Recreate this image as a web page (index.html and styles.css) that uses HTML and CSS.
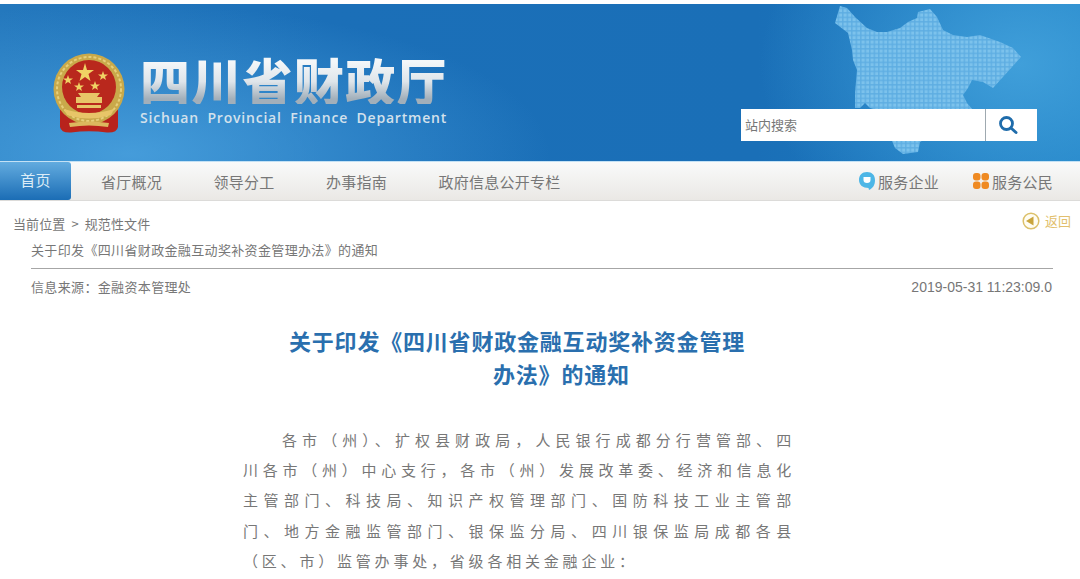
FILE: index.html
```html
<!DOCTYPE html>
<html lang="zh-CN">
<head>
    <meta charset="UTF-8">
    <title>四川省财政厅</title>
    <link rel="stylesheet" href="styles.css">
</head>
<body>
    <header class="banner">
        <svg class="map" viewBox="0 0 190 155" aria-hidden="true">
            <defs>
                <pattern id="dots" width="4.500" height="4.500" patternUnits="userSpaceOnUse">
                    <rect width="4.500" height="4.500" fill="#5dade2"/>
                    <rect x="0.500" y="0.500" width="3.200" height="3.200" fill="#7cc2ec"/>
                </pattern>
            </defs>
            <path fill="url(#dots)" d="M6 2 L13 4 L21 13 L33 24 L43 28 L53 28 L66 24 L74 18 L83 14 L84 8 L96 5 L103 13 L109 26 L119 31 L133 33 L146 31 L166 38 L179 44 L187 53 L178 63 L168 74 L159 84 L149 78 L138 76 L134 84 L129 91 L133 99 L139 106 L86 138 L84 148 L69 150 L61 144 L58 137 L40 105 L36 104 L31 99 L26 104 L21 104 L21 89 L23 66 L19 56 L18 46 L14 29 L1 19 Z"/>
        </svg>
        <div class="brand">
            <svg class="emblem" viewBox="0 0 72 80" aria-hidden="true">
                <path fill="#b8231c" d="M7 50 L7 74 Q8 80 18 79.500 Q36 77 54 79.500 Q64 80 65 74 L65 50 Z"/>
                <circle cx="36" cy="36" r="35.500" fill="#c9a94a"/>
                <circle cx="36" cy="36" r="32" fill="none" stroke="#e6cf7a" stroke-width="2" stroke-dasharray="3 2"/>
                <circle cx="36" cy="34" r="27" fill="#b9281d"/>
                <path fill="#f0d264" d="M32 10 L34 17 L41 17 L35.500 21 L37.500 28 L32 24 L26.500 28 L28.500 21 L23 17 L30 17 Z"/>
                <path fill="#f0d264" d="M15 22 L16.200 25.500 L20 25.500 L17 27.700 L18 31 L15 29 L12 31 L13 27.700 L10 25.500 L13.800 25.500 Z"/>
                <path fill="#f0d264" d="M50 18 L51.200 21.500 L55 21.500 L52 23.700 L53 27 L50 25 L47 27 L48 23.700 L45 21.500 L48.800 21.500 Z"/>
                <path fill="#f0d264" d="M26 29 L27.200 32.500 L31 32.500 L28 34.700 L29 38 L26 36 L23 38 L24 34.700 L21 32.500 L24.800 32.500 Z"/>
                <path fill="#f0d264" d="M42 28 L43.200 31.500 L47 31.500 L44 33.700 L45 37 L42 35 L39 37 L40 33.700 L37 31.500 L40.800 31.500 Z"/>
                <path fill="#e8c568" d="M25 40 H47 L44 44 H49 V50 H23 V44 H28 Z"/>
                <path fill="#e8c568" d="M11 56 Q36 64 61 56 L58 62 Q36 69 14 62 Z"/>
                <path fill="#e8c568" d="M24 52 H48 V55 H24 Z"/>
                <path fill="#dcb85e" d="M16 70 Q36 67 56 70 L55 74 Q36 71 17 74 Z"/>
            </svg>
            <div class="brand-text">
                <div class="brand-name">四川省财政厅</div>
                <div class="brand-en">Sichuan Provincial Finance Department</div>
            </div>
        </div>
        <form class="search">
            <span class="search-input">站内搜索</span>
            <span class="search-btn">
                <svg viewBox="0 0 20 20" width="20" height="20" aria-hidden="true">
                    <circle cx="8.500" cy="8.500" r="6" fill="none" stroke="#1f6cab" stroke-width="2.800"/>
                    <path d="M13 13 L18 17.500" stroke="#1f6cab" stroke-width="3" stroke-linecap="round"/>
                </svg>
            </span>
        </form>
    </header>

    <nav class="nav">
        <a class="nav-home">首页</a>
        <div class="nav-items">
            <a>省厅概况</a>
            <a>领导分工</a>
            <a>办事指南</a>
            <a>政府信息公开专栏</a>
        </div>
        <div class="nav-side">
            <a>
                <svg viewBox="0 0 16 18" width="16" height="18" aria-hidden="true">
                    <path fill="#4db6e6" d="M8 0 C13 0 16 3 16 8 C16 13 14 16 10 18 L9.500 16 C4 16 0 13 0 8 C0 3 3 0 8 0 Z"/>
                    <path fill="#fff" d="M4.500 5 H11.500 V8 Q11.500 11 8 11 Q4.500 11 4.500 8 Z"/>
                </svg>
                服务企业
            </a>
            <a>
                <svg viewBox="0 0 16 16" width="16" height="16" aria-hidden="true">
                    <rect x="0" y="0" width="7.500" height="7.500" rx="3" fill="#ef8a22"/>
                    <rect x="8.500" y="0" width="7.500" height="7.500" rx="3" fill="#ef8a22"/>
                    <rect x="0" y="8.500" width="7.500" height="7.500" rx="3" fill="#ef8a22"/>
                    <rect x="8.500" y="8.500" width="7.500" height="7.500" rx="3" fill="#ef8a22"/>
                </svg>
                服务公民
            </a>
        </div>
    </nav>

    <main class="content">
        <div class="crumb-row">
            <div class="crumb">当前位置 &gt; 规范性文件</div>
            <a class="back">
                <svg viewBox="0 0 18 18" width="18" height="18" aria-hidden="true">
                    <circle cx="9" cy="9" r="7.800" fill="#fffdf2" stroke="#dcc06a" stroke-width="1.500"/>
                    <path d="M4 9 L11.500 4.500 V13.500 Z" fill="#c9a43c"/>
                </svg>
                返回
            </a>
        </div>
        <div class="doc-name">关于印发《四川省财政金融互动奖补资金管理办法》的通知</div>
        <div class="doc-meta">
            <span>信息来源：金融资本管理处</span>
            <span class="doc-date">2019-05-31 11:23:09.0</span>
        </div>
        <h1 class="doc-title">
            <span class="title-first">关于印发《四川省财政金融互动奖补资金管理</span>
            <span class="title-second">办法》的通知</span>
        </h1>
        <p class="doc-body">
            <span class="line line-first">各市（州）、扩权县财政局，人民银行成都分行营管部、四</span>
            <span class="line">川各市（州）中心支行，各市（州）发展改革委、经济和信息化</span>
            <span class="line">主管部门、科技局、知识产权管理部门、国防科技工业主管部</span>
            <span class="line">门、地方金融监管部门、银保监分局、四川银保监局成都各县</span>
            <span class="line line-last">（区、市）监管办事处，省级各相关金融企业：</span>
        </p>
    </main>
</body>
</html>
```

FILE: styles.css
```css
* {
    box-sizing: border-box;
}

html, body {
    height: 579px;
    overflow: hidden;
}

body {
    margin: 0;
    padding-top: 4px;
    background: #fff;
    font-family: "Noto Sans CJK SC", "Liberation Sans", sans-serif;
    color: #666;
}

.banner {
    position: relative;
    height: 157px;
    display: flex;
    align-items: flex-start;
    justify-content: space-between;
    background:
        radial-gradient(ellipse 420px 150px at 130px 150px, rgba(78, 166, 226, 0.8), rgba(78, 166, 226, 0) 100%),
        radial-gradient(ellipse 260px 190px at 1020px 60px, rgba(70, 165, 222, 0.85), rgba(70, 165, 222, 0) 100%),
        linear-gradient(90deg, #2478bd, #1b6fb8 30%, #1a6fb7 70%, #1d7fc4);
}

.map {
    position: absolute;
    left: 834px;
    top: 0;
    width: 190px;
    height: 155px;
}

.brand {
    position: relative;
    display: flex;
    align-items: flex-start;
    gap: 15px;
    margin: 49px 0 0 53px;
}

.emblem {
    width: 72px;
    height: 80px;
}

.brand-name {
    margin-top: 1px;
    font-size: 50px;
    line-height: 50px;
    font-weight: 900;
    letter-spacing: 1.300px;
    background: linear-gradient(180deg, #f4f7f9 15%, #dfe5ea 55%, #a2afba 90%);
    -webkit-background-clip: text;
    background-clip: text;
    color: transparent;
}

.brand-en {
    margin-top: 5px;
    font-family: "Open Sans", "Liberation Sans", sans-serif;
    font-size: 14px;
    line-height: 18px;
    font-weight: 600;
    letter-spacing: 0.800px;
    word-spacing: 4px;
    color: #d3e1ec;
}

.search {
    position: relative;
    display: flex;
    width: 296px;
    height: 32px;
    margin: 105px 43px 0 0;
    background: #fff;
}

.search-input {
    flex: 1;
    padding-left: 4px;
    border-right: 1px solid #9fa9b0;
    font-size: 13px;
    line-height: 32px;
    color: #777;
}

.search-btn {
    display: flex;
    align-items: center;
    justify-content: center;
    width: 51px;
    padding-right: 8px;
}

.nav {
    height: 40px;
    display: flex;
    align-items: center;
    border-top: 1px solid #c3e1f5;
    border-bottom: 1px solid #dcdbd9;
    background: linear-gradient(180deg, #f9fafa, #eae8e5);
    font-size: 15px;
    letter-spacing: 0.250px;
    color: #777;
}

.nav-home {
    width: 71px;
    height: 38px;
    border-radius: 0 3px 3px 0;
    background: linear-gradient(180deg, #62abdf, #1b6db5);
    color: #dcecf7;
    text-align: center;
    line-height: 36px;
}

.nav-items {
    display: flex;
    gap: 51.500px;
    margin-left: 30px;
}

.nav-side {
    display: flex;
    gap: 34px;
    margin-left: auto;
    margin-right: 27px;
}

.nav-side a {
    display: flex;
    align-items: center;
    gap: 3px;
}

.content {
    padding: 0 27px 0 13px;
    font-size: 13px;
    letter-spacing: 0.350px;
}

.crumb-row {
    display: flex;
    justify-content: space-between;
    align-items: center;
    height: 22px;
    margin-top: 11px;
}

.crumb {
    letter-spacing: 0.100px;
    word-spacing: 3px;
    color: #777;
}

.back {
    display: flex;
    align-items: center;
    gap: 5px;
    margin-right: -18px;
    margin-bottom: 5px;
    letter-spacing: 0;
    color: #e2bf6d;
}

.doc-name {
    margin: 4px 0 0 18px;
    height: 31px;
    line-height: 24px;
    border-bottom: 1px solid #a6a6a6;
    color: #777;
}

.doc-meta {
    display: flex;
    justify-content: space-between;
    margin-left: 18px;
    height: 36px;
    line-height: 36px;
    color: #777;
}

.doc-date {
    margin-right: 1px;
    font-family: "Liberation Sans", sans-serif;
    font-size: 14px;
    letter-spacing: 0;
}

.doc-title {
    margin: 19px 0 0;
    font-size: 22px;
    line-height: 33px;
    font-weight: 700;
    letter-spacing: 0.800px;
    color: #2a6fae;
}

.title-first, .title-second {
    display: block;
}

.title-first {
    padding-left: 276px;
}

.title-second {
    padding-left: 480px;
}

.doc-body {
    width: 552px;
    margin: 35px 0 0 230px;
    font-size: 15px;
    line-height: 30.200px;
    letter-spacing: 3.800px;
    color: #777;
}

.line {
    display: block;
    text-align: justify;
    text-align-last: justify;
    white-space: nowrap;
}

.line-first {
    padding-left: 39px;
}

.line-last {
    text-align-last: left;
}
```
